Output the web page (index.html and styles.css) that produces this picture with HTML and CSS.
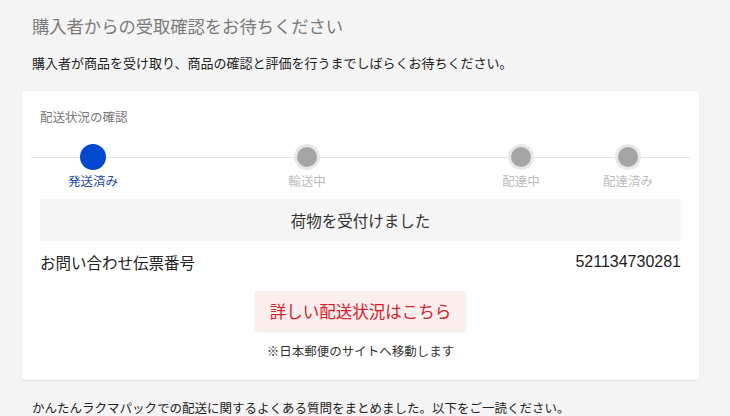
FILE: index.html
```html
<!DOCTYPE html>
<html lang="ja">
<head>
<meta charset="utf-8">
<title>受取確認</title>
<link rel="stylesheet" href="styles.css">
</head>
<body>
<div class="page">
  <h1 class="title">購入者からの受取確認をお待ちください</h1>
  <p class="lead">購入者が商品を受け取り、商品の確認と評価を行うまでしばらくお待ちください。</p>
  <section class="card">
    <h2 class="card-heading">配送状況の確認</h2>
    <div class="timeline">
      <div class="step step-done"><span class="dot"></span><span class="label">発送済み</span></div>
      <div class="step step-2"><span class="dot"></span><span class="label">輸送中</span></div>
      <div class="step step-3"><span class="dot"></span><span class="label">配達中</span></div>
      <div class="step step-4"><span class="dot"></span><span class="label">配達済み</span></div>
    </div>
    <div class="status">荷物を受付けました</div>
    <div class="tracking">
      <span>お問い合わせ伝票番号</span>
      <span class="number">521134730281</span>
    </div>
    <div class="action">
      <a class="btn" href="#">詳しい配送状況はこちら</a>
      <p class="note">※日本郵便のサイトへ移動します</p>
    </div>
  </section>
  <p class="faq">かんたんラクマパックでの配送に関するよくある質問をまとめました。以下をご一読ください。</p>
</div>
</body>
</html>
```
FILE: styles.css
```css
html, body {
  margin: 0;
  padding: 0;
}
body {
  background: #f4f4f4;
  font-family: "Noto Sans CJK JP", "Noto Sans", sans-serif;
  color: #333;
  width: 730px;
  height: 416px;
  overflow: hidden;
}
.page {
  padding: 0 31px 0 22px;
}
.title {
  margin: 0;
  padding: 13px 0 0 10px;
  font-size: 17.3px;
  line-height: 26px;
  font-weight: 400;
  color: #7a7a7a;
}
.lead {
  margin: 0;
  padding: 15px 0 0 10px;
  font-size: 13px;
  line-height: 18px;
  color: #222;
}
.card {
  margin-top: 19px;
  background: #fff;
  border-radius: 3px;
  box-shadow: 0 1px 2px rgba(0,0,0,0.08);
  padding: 17px 18px 0;
  height: 289px;
  box-sizing: border-box;
}
.card-heading {
  margin: 0;
  font-size: 12.5px;
  line-height: 18px;
  font-weight: 400;
  color: #777;
}
.timeline {
  margin: 18px -9px 0;
  padding: 0 9px;
  display: flex;
  background: linear-gradient(#e2e2e2, #e2e2e2) no-repeat 0 13px / 100% 1px;
}
.step {
  width: 106px;
  display: flex;
  flex-direction: column;
  align-items: center;
}
.step-2, .step-3 {
  margin-left: 108px;
}
.step-4 {
  margin-left: auto;
}
.dot {
  width: 20px;
  height: 20px;
  border-radius: 50%;
  background: #a5a5a5;
  border: 3px solid #e8e8e8;
}
.step-done .dot {
  background: #0049cf;
  border-color: #0049cf;
}
.label {
  margin-top: 2px;
  font-size: 12.5px;
  line-height: 18px;
  color: #bdbdbd;
}
.step-done .label {
  color: #1a4aa8;
}
.status {
  margin-top: 9px;
  height: 42px;
  background: #f5f5f5;
  display: flex;
  align-items: center;
  justify-content: center;
  font-size: 15.5px;
  color: #333;
}
.tracking {
  display: flex;
  justify-content: space-between;
  align-items: center;
  height: 42px;
  font-size: 15.5px;
  color: #222;
}
.tracking .number {
  font-family: "Liberation Sans", Arial, sans-serif;
  font-size: 16px;
}
.action {
  display: flex;
  flex-direction: column;
  align-items: center;
  margin-top: 8px;
}
.btn {
  display: flex;
  align-items: center;
  justify-content: center;
  width: 211px;
  height: 40px;
  background: #fdeeee;
  border-radius: 2px;
  box-shadow: 0 1px 2px rgba(0,0,0,0.08);
  color: #d3202a;
  font-size: 16.5px;
  text-decoration: none;
}
.note {
  margin: 11px 0 0;
  font-size: 12.5px;
  line-height: 18px;
  color: #333;
}
.faq {
  margin: 0;
  padding: 19px 0 0 10px;
  font-size: 12.5px;
  line-height: 18px;
  color: #222;
}
```
